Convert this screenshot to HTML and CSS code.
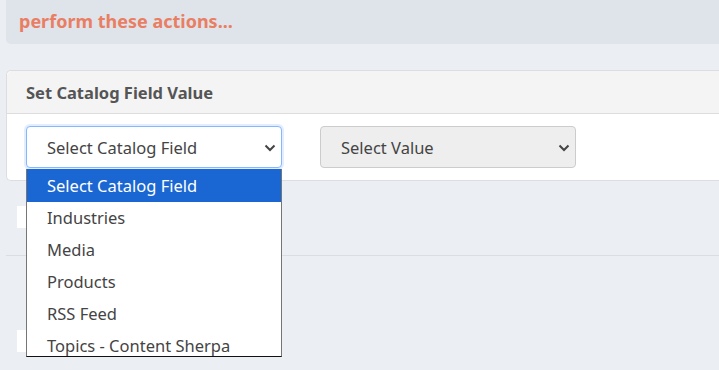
FILE: index.html
```html
<!DOCTYPE html>
<html>
<head>
<meta charset="utf-8">
<link rel="stylesheet" href="styles.css">
</head>
<body>
<div class="banner"><span class="banner-text">perform these actions...</span></div>
<div class="card">
  <div class="card-header">Set Catalog Field Value</div>
  <div class="card-body">
    <div class="select-wrap">
      <div class="select focused"><span>Select Catalog Field</span>
        <svg class="chev" width="12" height="8" viewBox="0 0 12 8"><path d="M1.5 1.5 L6 6 L10.5 1.5" fill="none" stroke="#444" stroke-width="2"/></svg>
      </div>
      <ul class="dropdown">
        <li class="active">Select Catalog Field</li>
        <li>Industries</li>
        <li>Media</li>
        <li>Products</li>
        <li>RSS Feed</li>
        <li>Topics - Content Sherpa</li>
      </ul>
    </div>
    <div class="select disabled"><span>Select Value</span>
      <svg class="chev" width="12" height="8" viewBox="0 0 12 8"><path d="M1.5 1.5 L6 6 L10.5 1.5" fill="none" stroke="#444" stroke-width="2"/></svg>
    </div>
  </div>
</div>
<div class="below">
  <div class="stub"></div>
</div>
<div class="section">
  <div class="stub stub2"></div>
</div>
</body>
</html>
```
FILE: styles.css
```css
html, body { margin: 0; padding: 0; }
body {
  background: #ebeef3;
  font-family: "Noto Sans", "Open Sans", sans-serif;
  color: #444;
  width: 719px;
  height: 370px;
  overflow: hidden;
}
.banner {
  margin-left: 6px;
  height: 44px;
  background: #dfe3ea;
  border-bottom-left-radius: 5px;
  display: flex;
  align-items: center;
  padding-left: 13px;
}
.banner-text {
  color: #e97e62;
  font-weight: 700;
  font-size: 18px;
  margin-top: -2px;
}
.card {
  margin-top: 26px;
  margin-left: 6px;
  background: #fff;
  border: 1px solid #dcdde0;
  border-right: none;
  border-radius: 5px 0 0 5px;
}
.card-header {
  height: 42px;
  background: #f4f4f4;
  border-bottom: 1px solid #dddddd;
  border-radius: 5px 0 0 0;
  display: flex;
  align-items: center;
  padding-left: 19px;
  font-weight: 700;
  font-size: 16.5px;
  color: #555;
}
.card-body {
  display: flex;
  gap: 38px;
  padding: 12px 19px;
}
.select-wrap { position: relative; }
.select {
  box-sizing: border-box;
  width: 256px;
  height: 42px;
  border: 1px solid #ccc;
  border-radius: 4px;
  display: flex;
  align-items: center;
  justify-content: space-between;
  padding: 1px 5px 0 20px;
  font-size: 16.5px;
  color: #444;
}
.select.focused {
  border-color: #86b7fe;
  box-shadow: 0 0 0 2px rgba(13,110,253,0.12);
  background: #fff;
}
.select.disabled { background: #eeeeee; }
.chev { flex: none; }
.dropdown {
  position: absolute;
  top: 43px;
  left: 0;
  width: 256px;
  box-sizing: border-box;
  margin: 0;
  padding: 0;
  list-style: none;
  background: #fff;
  border-left: 1px solid #767676;
  border-right: 1px solid #767676;
  border-bottom: 1px solid #111;
  height: 188px;
  overflow: hidden;
  z-index: 5;
}
.dropdown li {
  height: 32px;
  line-height: 32px;
  padding-left: 20px;
  font-size: 16.5px;
  color: #444;
}
.dropdown li.active {
  background: #1a66d2;
  color: #fff;
  height: 33px;
  line-height: 34px;
}
.below {
  height: 75px;
  border-bottom: 1px solid #dcdde0;
  margin-left: 6px;
  padding-top: 25px;
  box-sizing: border-box;
}
.stub {
  width: 20px;
  height: 22px;
  background: #fff;
  margin-left: 11px;
}
.section {
  padding-top: 74px;
}
.stub2 { margin-left: 17px; }
```
